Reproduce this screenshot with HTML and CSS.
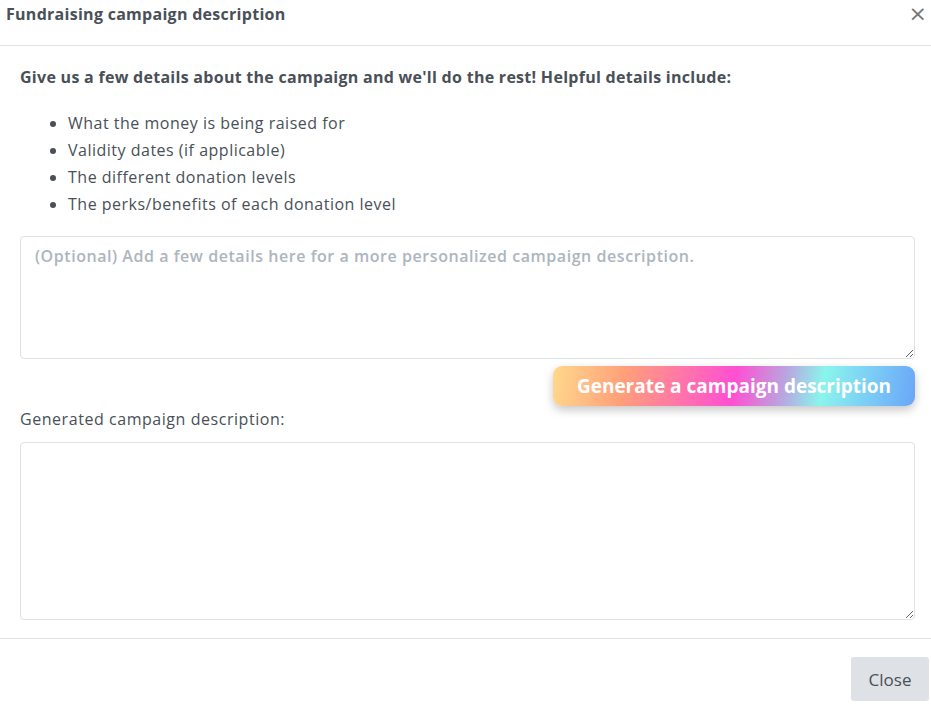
FILE: index.html
```html
<!DOCTYPE html>
<html>
<head>
<meta charset="utf-8">
<link rel="stylesheet" href="styles.css">
</head>
<body>
<div class="modal">
  <div class="modal-header">
    <h5 class="modal-title">Fundraising campaign description</h5>
    <button class="close-x" type="button">&times;</button>
  </div>
  <div class="modal-body">
    <p class="intro">Give us a few details about the campaign and we'll do the rest! Helpful details include:</p>
    <ul class="details">
      <li>What the money is being raised for</li>
      <li>Validity dates (if applicable)</li>
      <li>The different donation levels</li>
      <li>The perks/benefits of each donation level</li>
    </ul>
    <textarea class="input input-details" placeholder="(Optional) Add a few details here for a more personalized campaign description."></textarea>
    <div class="actions">
      <button class="generate" type="button">Generate a campaign description</button>
    </div>
    <label class="gen-label">Generated campaign description:</label>
    <textarea class="input input-result"></textarea>
  </div>
  <div class="modal-footer">
    <button class="btn-close" type="button">Close</button>
  </div>
</div>
</body>
</html>
```
FILE: styles.css
```css
html, body {
  margin: 0;
  padding: 0;
  background: #fff;
}
body {
  font-family: "Open Sans", "Noto Sans", sans-serif;
  color: #495057;
  font-size: 16px;
}
.modal {
  width: 931px;
}
.modal-header {
  display: flex;
  align-items: flex-start;
  justify-content: space-between;
  height: 46px;
  box-sizing: border-box;
  border-bottom: 1px solid #dee2e6;
  padding: 4px 4px 0 6px;
}
.modal-title {
  margin: 0;
  font-size: 16px;
  font-weight: 700;
  line-height: 20px;
  letter-spacing: 0.28px;
  color: #495057;
}
.close-x {
  border: 0;
  background: none;
  padding: 0;
  font-size: 22px;
  line-height: 20px;
  color: #777;
  font-family: "DejaVu Sans", sans-serif;
  cursor: pointer;
}
.modal-body {
  padding: 20px 16px 18px 20px;
  display: flex;
  flex-direction: column;
}
.intro {
  margin: 0;
  font-weight: 700;
  font-size: 16px;
  line-height: 22px;
  letter-spacing: 0.28px;
}
.details {
  margin: 22px 0 18px 0;
  padding-left: 48px;
  line-height: 27px;
  letter-spacing: 0.5px;
}
.input {
  display: block;
  width: 895px;
  box-sizing: border-box;
  border: 1px solid #dee2e6;
  border-radius: 4px;
  padding: 8px 14px;
  font-family: inherit;
  font-size: 16px;
  color: #495057;
  resize: vertical;
  outline: none;
}
.input::placeholder {
  color: #adb5bd;
  font-weight: 600;
  letter-spacing: 0.55px;
}
.input-details {
  height: 123px;
}
.actions {
  display: flex;
  justify-content: flex-end;
  margin-top: 7px;
}
.generate {
  width: 362px;
  height: 40px;
  border: 0;
  border-radius: 9px;
  color: #fff;
  font-family: inherit;
  font-size: 19px;
  font-weight: 700;
  background: linear-gradient(100deg, #ffd98c 0%, #ff9f7a 20%, #ff6fb0 38%, #ff4fd2 50%, #b7a8e0 64%, #8af5ec 74%, #7ccff5 86%, #6aa6f8 100%);
  box-shadow: 0 4px 10px rgba(0,0,0,0.22);
  cursor: pointer;
}
.gen-label {
  margin-top: 2px;
  line-height: 22px;
  letter-spacing: 0.55px;
}
.input-result {
  margin-top: 12px;
  height: 178px;
}
.modal-footer {
  border-top: 1px solid #dee2e6;
  display: flex;
  justify-content: flex-end;
  padding: 18px 2px 8px 0;
}
.btn-close {
  width: 78px;
  height: 44px;
  border: 0;
  border-radius: 3px;
  background: #dee2e6;
  color: #495057;
  font-family: inherit;
  font-size: 17px;
  cursor: pointer;
}
```
